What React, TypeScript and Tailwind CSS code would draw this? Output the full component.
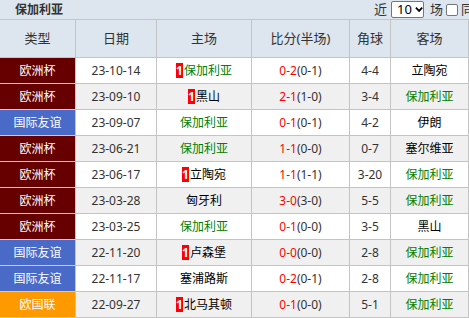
import React from "react";

type Row = {
  type: string;
  typeBg: string;
  date: string;
  home: string;
  homeRed?: boolean;
  score: string;
  half: string;
  corner: string;
  away: string;
};

const rows: Row[] = [
  { type: "欧洲杯", typeBg: "bg-[#660000]", date: "23-10-14", home: "保加利亚", homeRed: true, score: "0-2", half: "(0-1)", corner: "4-4", away: "立陶宛" },
  { type: "欧洲杯", typeBg: "bg-[#660000]", date: "23-09-10", home: "黑山", homeRed: true, score: "2-1", half: "(1-0)", corner: "3-4", away: "保加利亚" },
  { type: "国际友谊", typeBg: "bg-[#4a6ac8]", date: "23-09-07", home: "保加利亚", score: "0-1", half: "(0-1)", corner: "4-2", away: "伊朗" },
  { type: "欧洲杯", typeBg: "bg-[#660000]", date: "23-06-21", home: "保加利亚", score: "1-1", half: "(0-0)", corner: "0-7", away: "塞尔维亚" },
  { type: "欧洲杯", typeBg: "bg-[#660000]", date: "23-06-17", home: "立陶宛", homeRed: true, score: "1-1", half: "(1-1)", corner: "3-20", away: "保加利亚" },
  { type: "欧洲杯", typeBg: "bg-[#660000]", date: "23-03-28", home: "匈牙利", score: "3-0", half: "(3-0)", corner: "5-5", away: "保加利亚" },
  { type: "欧洲杯", typeBg: "bg-[#660000]", date: "23-03-25", home: "保加利亚", score: "0-1", half: "(0-0)", corner: "3-5", away: "黑山" },
  { type: "国际友谊", typeBg: "bg-[#4a6ac8]", date: "22-11-20", home: "卢森堡", homeRed: true, score: "0-0", half: "(0-0)", corner: "2-8", away: "保加利亚" },
  { type: "国际友谊", typeBg: "bg-[#4a6ac8]", date: "22-11-17", home: "塞浦路斯", score: "0-2", half: "(0-1)", corner: "2-8", away: "保加利亚" },
  { type: "欧国联", typeBg: "bg-[#ff9900]", date: "22-09-27", home: "北马其顿", homeRed: true, score: "0-1", half: "(0-0)", corner: "5-1", away: "保加利亚" },
];

const cols = "grid grid-cols-[76px_81px_95px_98px_41px_78px]";
const cell = "flex items-center justify-center border-r border-b border-[#c4c4c4]";

function Team({ name }: { name: string }) {
  const isBg = name === "保加利亚";
  return <span className={isBg ? "text-[#008000]" : "text-black"}>{name}</span>;
}

export default function App() {
  return (
    <div
      className="w-[469px] h-[318px] overflow-hidden bg-white text-[12px] leading-none"
      style={{ fontFamily: '"Noto Sans", "Noto Sans CJK SC", sans-serif' }}
    >
      <div className="h-[19px] bg-[#dde5ee] flex items-center pl-[15px] relative">
        <span className="font-bold text-[#333] text-[12px]">保加利亚</span>
        <div className="absolute left-[374px] top-0 h-[19px] flex items-center text-[#333] text-[13px]">
          <span>近</span>
          <div className="ml-[4px] w-[33px] h-[17px] bg-white border border-[#767676] rounded-[2px] flex items-center pl-[5px] text-[13px] text-black">
            <span>10</span>
            <svg width="9" height="7" viewBox="0 0 9 7" className="ml-[3px]">
              <path d="M1 1.5 L4.5 5 L8 1.5" stroke="#000" strokeWidth="2" fill="none" />
            </svg>
          </div>
          <span className="ml-[6px]">场</span>
          <div className="ml-[3px] w-[12px] h-[12px] border border-[#767676] rounded-[2px] bg-white" />
          <span className="ml-[3px]">同</span>
        </div>
      </div>
      <div className={`${cols} h-[39px] bg-[#dde5ee] border-t border-[#c4c4c4] text-[13px] text-[#333]`}>
        {["类型", "日期", "主场", "比分(半场)", "角球", "客场"].map((h) => (
          <div key={h} className={cell}>{h}</div>
        ))}
      </div>
      {rows.map((r, i) => (
        <div key={i} className={`${cols} h-[26px] ${i % 2 === 0 ? "bg-white" : "bg-[#f0f0f0]"}`}>
          <div className={`${cell} ${r.typeBg} text-white border-b-[#cccccc]`}>{r.type}</div>
          <div className={`${cell} text-[#333]`}>{r.date}</div>
          <div className={cell}>
            {r.homeRed && (
              <span className="bg-[#ff0000] text-white font-bold w-[7px] h-[15px] flex items-center justify-center mr-[1px] text-[12px]">1</span>
            )}
            <Team name={r.home} />
          </div>
          <div className={cell}>
            <span className="text-[#ff0000]">{r.score}</span>
            <span className="text-[#333]">{r.half}</span>
          </div>
          <div className={`${cell} text-[#333]`}>{r.corner}</div>
          <div className={cell}><Team name={r.away} /></div>
        </div>
      ))}
    </div>
  );
}
